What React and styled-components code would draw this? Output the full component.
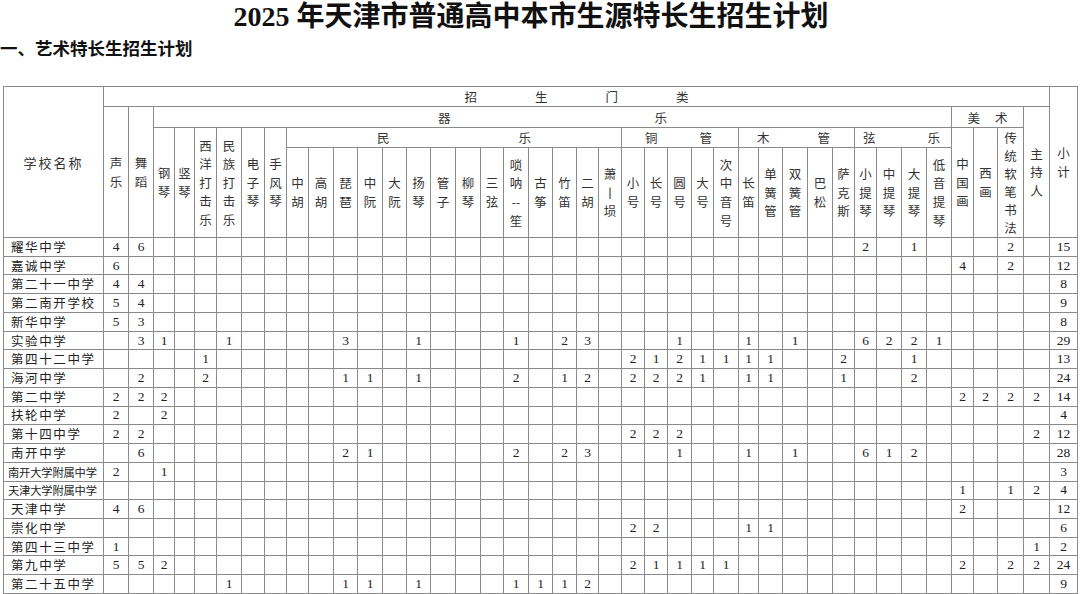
import React from 'react';
import styled, { createGlobalStyle } from 'styled-components';

const GlobalStyle = createGlobalStyle`
  html, body {
    margin: 0;
    padding: 0;
    background: #fff;
  }
  body {
    font-family: "Liberation Serif", "Noto Sans CJK SC", serif;
    color: #222;
  }
`;

const Page = styled.div`
  width: 1080px;
  height: 594px;
  overflow: hidden;
  display: flex;
  flex-direction: column;
`;

const Title = styled.h1`
  flex-shrink: 0;
  margin: 0;
  height: 34px;
  padding-right: 18px;
  text-align: center;
  font-family: "Liberation Serif", "Noto Sans CJK SC", serif;
  font-size: 28px;
  line-height: 34px;
  font-weight: 700;
  color: #111;
`;

const Subtitle = styled.h2`
  flex-shrink: 0;
  margin: 0;
  height: 52px;
  font-family: "Noto Sans CJK SC", sans-serif;
  font-size: 17.5px;
  line-height: 28px;
  font-weight: 700;
  color: #111;
`;

const Table = styled.table`
  flex-shrink: 0;
  margin-left: 3px;
  width: 1074px;
  table-layout: fixed;
  border-collapse: collapse;
  font-size: 13px;
`;

const Col = styled.col`
  width: ${p => p.$w}px;
`;

const HeadRow = styled.tr`
  height: ${p => p.$h}px;
`;

const BodyRow = styled.tr`
  height: 18.7px;
`;

const Th = styled.th`
  border: 1px solid #8a8a8a;
  padding: 0;
  font-family: "Noto Sans CJK SC", sans-serif;
  font-weight: 400;
  font-size: 12.5px;
  color: #333;
  text-align: center;
  vertical-align: middle;
  overflow: hidden;
  white-space: nowrap;
`;

const Spread = styled.span`
  display: inline-flex;
  justify-content: center;
  gap: ${p => p.$gap}px;
  line-height: 16px;
  margin-left: ${p => p.$shift || 0}px;
`;

const VStack = styled.span`
  display: inline-flex;
  flex-direction: column;
  align-items: center;
  line-height: ${p => p.$lh || 18.6}px;
`;

const NameHead = styled.span`
  letter-spacing: 2px;
  font-size: 13px;
`;

const Td = styled.td`
  border: 1px solid #8a8a8a;
  padding: 0;
  text-align: center;
  vertical-align: middle;
  font-family: "Liberation Serif", serif;
  font-size: 13.5px;
  color: #222;
  line-height: 16px;
  overflow: hidden;
  white-space: nowrap;
`;

const NameCell = styled.td`
  border: 1px solid #8a8a8a;
  padding: 0 0 0 ${p => (p.$tight ? 4 : 7)}px;
  text-align: left;
  vertical-align: middle;
  font-family: "Noto Sans CJK SC", sans-serif;
  font-size: ${p => (p.$tight ? 11.3 : 12.5)}px;
  letter-spacing: ${p => (p.$tight ? -0.2 : 1.6)}px;
  color: #222;
  line-height: 16px;
  white-space: nowrap;
  overflow: hidden;
`;

const widths = [
  100,
  25, 25, 21, 20, 22, 25, 23, 22,
  22, 25, 24, 25, 24, 24, 25, 25, 23, 25, 24, 24, 22, 23,
  23, 23, 24, 22, 25,
  20, 24, 25, 25, 22,
  22, 25, 25, 25,
  22, 24, 26,
  26, 28,
];

function V({ chars, lh }) {
  return (
    <VStack $lh={lh}>
      {chars.map((c, i) => (
        <span key={i}>{c}</span>
      ))}
    </VStack>
  );
}

function S({ text, gap, shift }) {
  return (
    <Spread $gap={gap} $shift={shift}>
      {Array.from(text).map((c, i) => (
        <span key={i}>{c}</span>
      ))}
    </Spread>
  );
}

const split = s => Array.from(s);

const leadCols = ['钢琴', '竖琴', '西洋打击乐', '民族打击乐', '电子琴', '手风琴'];
const folk = ['中胡', '高胡', '琵琶', '中阮', '大阮', '扬琴', '管子', '柳琴', '三弦'];
const rest = ['古筝', '竹笛', '二胡'];
const brass = ['小号', '长号', '圆号', '大号', '次中音号'];
const wood = ['长笛', '单簧管', '双簧管', '巴松', '萨克斯'];
const strings = ['小提琴', '中提琴', '大提琴', '低音提琴'];
const art = ['中国画', '西画'];

const rows = [
  ['耀华中学', { 0: 4, 1: 6, 32: 2, 34: 1, 38: 2 }, 15],
  ['嘉诚中学', { 0: 6, 36: 4, 38: 2 }, 12],
  ['第二十一中学', { 0: 4, 1: 4 }, 8],
  ['第二南开学校', { 0: 5, 1: 4 }, 9],
  ['新华中学', { 0: 5, 1: 3 }, 8],
  ['实验中学', { 1: 3, 2: 1, 5: 1, 10: 3, 13: 1, 17: 1, 19: 2, 20: 3, 24: 1, 27: 1, 29: 1, 32: 6, 33: 2, 34: 2, 35: 1 }, 29],
  ['第四十二中学', { 4: 1, 22: 2, 23: 1, 24: 2, 25: 1, 26: 1, 27: 1, 28: 1, 31: 2, 34: 1 }, 13],
  ['海河中学', { 1: 2, 4: 2, 10: 1, 11: 1, 13: 1, 17: 2, 19: 1, 20: 2, 22: 2, 23: 2, 24: 2, 25: 1, 27: 1, 28: 1, 31: 1, 34: 2 }, 24],
  ['第二中学', { 0: 2, 1: 2, 2: 2, 36: 2, 37: 2, 38: 2, 39: 2 }, 14],
  ['扶轮中学', { 0: 2, 2: 2 }, 4],
  ['第十四中学', { 0: 2, 1: 2, 22: 2, 23: 2, 24: 2, 39: 2 }, 12],
  ['南开中学', { 1: 6, 10: 2, 11: 1, 17: 2, 19: 2, 20: 3, 24: 1, 27: 1, 29: 1, 32: 6, 33: 1, 34: 2 }, 28],
  ['南开大学附属中学', { 0: 2, 2: 1 }, 3, true],
  ['天津大学附属中学', { 36: 1, 38: 1, 39: 2 }, 4, true],
  ['天津中学', { 0: 4, 1: 6, 36: 2 }, 12],
  ['崇化中学', { 22: 2, 23: 2, 27: 1, 28: 1 }, 6],
  ['第四十三中学', { 0: 1, 39: 1 }, 2],
  ['第九中学', { 0: 5, 1: 5, 2: 2, 22: 2, 23: 1, 24: 1, 25: 1, 26: 1, 36: 2, 38: 2, 39: 2 }, 24],
  ['第二十五中学', { 5: 1, 10: 1, 11: 1, 13: 1, 17: 1, 18: 1, 19: 1, 20: 2 }, 9],
];

export default function App() {
  return (
    <Page>
      <GlobalStyle />
      <Title>2025 年天津市普通高中本市生源特长生招生计划</Title>
      <Subtitle>一、艺术特长生招生计划</Subtitle>
      <Table>
        <colgroup>
          {widths.map((w, i) => (
            <Col key={i} $w={w} />
          ))}
        </colgroup>
        <thead>
          <HeadRow $h={19}>
            <Th rowSpan={4}><NameHead>学校名称</NameHead></Th>
            <Th colSpan={40}><S text="招生门类" gap={58} /></Th>
            <Th rowSpan={4}><V chars={split('小计')} /></Th>
          </HeadRow>
          <HeadRow $h={21}>
            <Th rowSpan={3}><V chars={split('声乐')} /></Th>
            <Th rowSpan={3}><V chars={split('舞蹈')} /></Th>
            <Th colSpan={34}><S text="器乐" gap={204} /></Th>
            <Th colSpan={3}><S text="美术" gap={15} /></Th>
            <Th rowSpan={3}><V chars={split('主持人')} /></Th>
          </HeadRow>
          <HeadRow $h={18}>
            {leadCols.map(l => (
              <Th key={l} rowSpan={2}><V chars={split(l)} /></Th>
            ))}
            <Th colSpan={14}><S text="民乐" gap={129} /></Th>
            <Th colSpan={5}><S text="铜管" gap={42} shift={-3} /></Th>
            <Th colSpan={5}><S text="木管" gap={48} shift={-6} /></Th>
            <Th colSpan={4}><S text="弦乐" gap={52} shift={-3} /></Th>
            {art.map(l => (
              <Th key={l} rowSpan={2}><V chars={split(l)} /></Th>
            ))}
            <Th rowSpan={2}><V chars={split('传统软笔书法')} lh={18} /></Th>
          </HeadRow>
          <HeadRow $h={89}>
            {folk.map(l => (
              <Th key={l}><V chars={split(l)} /></Th>
            ))}
            <Th><V chars={['唢', '呐', '--', '笙']} /></Th>
            {rest.map(l => (
              <Th key={l}><V chars={split(l)} /></Th>
            ))}
            <Th><V chars={['萧', '丨', '埙']} /></Th>
            {brass.map(l => (
              <Th key={l}><V chars={split(l)} /></Th>
            ))}
            {wood.map(l => (
              <Th key={l}><V chars={split(l)} /></Th>
            ))}
            {strings.map(l => (
              <Th key={l}><V chars={split(l)} /></Th>
            ))}
          </HeadRow>
        </thead>
        <tbody>
          {rows.map(([name, vals, total, tight]) => (
            <BodyRow key={name}>
              <NameCell $tight={tight}>{name}</NameCell>
              {Array.from({ length: 40 }, (_, i) => (
                <Td key={i}>{vals[i] ?? ''}</Td>
              ))}
              <Td>{total}</Td>
            </BodyRow>
          ))}
        </tbody>
      </Table>
    </Page>
  );
}
